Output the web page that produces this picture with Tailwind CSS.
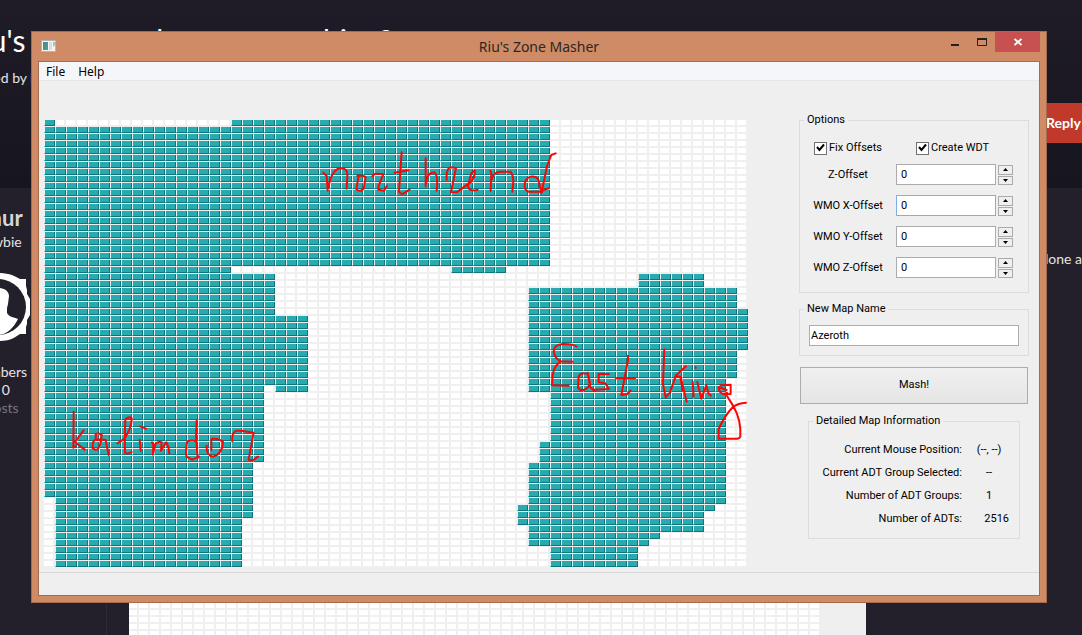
<!DOCTYPE html>
<html lang="en">
<head>
    <meta charset="UTF-8" />
    <meta name="viewport" content="width=device-width, initial-scale=1" />
    <title>Riu's Zone Masher</title>
    <script src="https://cdn.jsdelivr.net/npm/@tailwindcss/browser@4"></script>
</head>
<body class="relative min-h-screen overflow-hidden flex flex-col bg-[#23202b] font-['Lato',sans-serif] text-[#e4e4e6]">

    <!-- Forum thread behind the window -->
    <header class="h-[188px] shrink-0 flex justify-between bg-linear-to-b from-[#1f1c28] to-[#17151e]">
        <div class="-ml-9 pt-[22px] whitespace-nowrap">
            <h1 class="text-[30px] leading-9 text-white">Riu's zone masher not matching?</h1>
            <p class="mt-[10px] text-sm leading-5">Started by hur</p>
        </div>
        <button type="button" class="mt-[103px] h-10 w-[68px] pl-8 shrink-0 bg-[#c0392b] text-left text-sm font-bold text-white">Reply</button>
    </header>

    <main class="flex-1 flex">
        <aside class="w-[107px] shrink-0 border-r border-[#2e2b37]">
            <div class="-ml-[102px] w-[200px] pt-4 text-center text-sm">
                <h2 class="pl-2 text-[22px] leading-7 font-bold text-[#d6d6d8]">thur</h2>
                <p class="leading-5">Newbie</p>
                <svg class="mx-auto mt-5 mb-5 w-[66px] h-[70px]" viewBox="2 0 66 70">
                    <path d="M35 1C46 1 52 4 57 7H63V14L64 18V22L67 27V43L64 48V52L63 55V62H57C50 67 45 69 35 69S17 66 12 62H6V8H12C18 4 24 1 35 1Z" fill="#fff" />
                    <circle cx="35" cy="35" r="28" fill="#23202b" />
                    <path d="M35 16C42 16 46 20 46 24L45 32L44 36V41C46 45 50 45 55 47C50 57 43 63 35 63S20 57 16 48C24 45 28 44 28 39L26 27C25 21 29 16 35 16Z" fill="#fff" />
                </svg>
                <p class="leading-5">Members</p>
                <p class="pl-1 leading-4">0 0</p>
                <p class="pl-2 leading-5 text-[#77757d]">Posts</p>
            </div>
        </aside>
        <section class="flex-1 flex flex-col justify-between">
            <p class="pt-[61px] text-right text-sm leading-5">done a</p>
            <svg class="ml-[22px] w-[737px] h-8" viewBox="0 0 737 32">
                <defs>
                    <pattern id="thumbCell" x="-1" y="0" width="11" height="7" patternUnits="userSpaceOnUse">
                        <rect width="9" height="5" fill="#fff" />
                    </pattern>
                </defs>
                <rect width="737" height="32" fill="#efefef" />
                <rect width="690" height="32" fill="url(#thumbCell)" />
            </svg>
        </section>
    </main>

    <!-- Application window -->
    <div class="absolute left-[31px] right-[35px] top-[31px] border border-[#a66b4c] bg-[#ce8b65] px-[6px] pb-[6px] font-['Roboto',sans-serif] text-[11px] text-black">
        <div class="flex h-[29px] font-['Noto_Sans',sans-serif]">
            <div class="flex-1 pt-2">
                <svg class="ml-[3px] w-[15px] h-3" viewBox="0 0 15 12">
                    <defs>
                        <linearGradient id="appIcon" x1="0" y1="0" x2="1" y2="1">
                            <stop offset="0" stop-color="#4d7fa8" />
                            <stop offset="1" stop-color="#4fa86b" />
                        </linearGradient>
                    </defs>
                    <rect x=".5" y=".5" width="14" height="11" fill="#f4f4f4" stroke="#b9b3ae" />
                    <rect x="2" y="2" width="5" height="8" fill="url(#appIcon)" />
                    <rect x="8" y="2" width="3" height="8" fill="#dcdcdc" />
                    <path d="M12 2H14V5L12 7Z" fill="#9cc7b4" />
                </svg>
            </div>
            <h2 class="text-sm leading-[29px] text-[#2b2724]">Riu's Zone Masher</h2>
            <div class="flex-1 flex justify-end h-5">
                <button type="button" aria-label="Minimize" class="w-7 flex items-center justify-center">
                    <svg class="w-2 h-5" viewBox="0 0 8 20"><rect y="12" width="8" height="2" fill="#222" /></svg>
                </button>
                <button type="button" aria-label="Maximize" class="w-[26px] flex items-center justify-center">
                    <svg class="w-[10px] h-5" viewBox="0 0 10 20"><path d="M.5 7V13.500H9.500V7" fill="none" stroke="#222" /><rect y="6" width="10" height="2" fill="#222" /></svg>
                </button>
                <button type="button" aria-label="Close" class="w-[45px] flex items-center justify-center bg-[#c75050]">
                    <svg class="w-2 h-2" viewBox="0 0 8 8"><path d="M.5 1L7.500 7M7.500 1L.5 7" stroke="#fff" stroke-width="1.800" /></svg>
                </button>
            </div>
        </div>

        <div class="border border-[#a66b4c] bg-[#efefef]">
            <nav class="flex h-[19px] border-b border-[#e7e7e8] bg-[#f5f6f9] pl-[7px] gap-[13px] font-['Noto_Sans',sans-serif] text-xs leading-5">
                <a href="#">File</a>
                <a href="#">Help</a>
            </nav>

            <div class="flex justify-between pt-8 pl-[5px] pr-[10px] pb-1">
                <svg class="mt-[7px] w-[704px] h-[448px] shrink-0 overflow-visible" viewBox="0 0 704 448">
                    <defs>
                        <pattern id="emptyCell" width="11" height="7" patternUnits="userSpaceOnUse">
                            <rect width="9" height="5" fill="#fff" />
                        </pattern>
                        <pattern id="adtCell" width="11" height="7" patternUnits="userSpaceOnUse">
                            <rect width="11" height="7" fill="#efefef" />
                            <rect x="1" width="9" height="5" fill="#28aab1" />
                            <rect x="10" width="1" height="6" fill="#157278" />
                            <rect y="5" width="11" height="1" fill="#157278" />
                            <rect y="5" width="1" height="1" fill="#35d3db" />
                        </pattern>
                    </defs>
                    <rect width="704" height="448" fill="url(#emptyCell)" />

                    <g fill="url(#adtCell)">
                        <!-- west and north -->
                        <rect x="0" y="0" width="11" height="7" />
                        <rect x="187" y="0" width="319" height="7" />
                        <rect x="0" y="7" width="506" height="140" />
                        <rect x="0" y="147" width="187" height="7" />
                        <rect x="407" y="147" width="55" height="7" />
                        <rect x="0" y="154" width="231" height="42" />
                        <rect x="0" y="196" width="264" height="70" />
                        <rect x="0" y="266" width="220" height="7" />
                        <rect x="231" y="266" width="33" height="7" />
                        <rect x="0" y="273" width="220" height="70" />
                        <rect x="0" y="343" width="209" height="35" />
                        <rect x="11" y="378" width="198" height="21" />
                        <rect x="11" y="399" width="187" height="49" />
                        <!-- east -->
                        <rect x="594" y="154" width="66" height="14" />
                        <rect x="484" y="168" width="209" height="21" />
                        <rect x="484" y="189" width="220" height="42" />
                        <rect x="484" y="231" width="209" height="28" />
                        <rect x="484" y="259" width="198" height="14" />
                        <rect x="506" y="273" width="176" height="49" />
                        <rect x="495" y="322" width="187" height="21" />
                        <rect x="484" y="343" width="198" height="42" />
                        <rect x="473" y="385" width="198" height="7" />
                        <rect x="473" y="392" width="187" height="14" />
                        <rect x="484" y="406" width="176" height="7" />
                        <rect x="484" y="413" width="132" height="7" />
                        <rect x="484" y="420" width="121" height="7" />
                        <rect x="506" y="427" width="88" height="21" />
                    </g>

                    <!-- hand-drawn continent names -->
                    <g fill="none" stroke="#fb0505" stroke-width="6" stroke-linecap="round" stroke-linejoin="round">
                        <path transform="translate(266 20) scale(.3333)" d="M40 98L50 108L53 152M54 145C60 115 70 88 90 85C108 84 113 92 112 110L110 146M146 107L139 148Q142 153 153 152L161 146L167 112Q160 106 142 107M187 109Q190 100 203 101L220 103L206 137L205 149L222 152L231 137M275 37L267 155Q272 163 280 161L299 149M254 98L295 91M347 55V139M349 128Q350 98 373 97C382 103 383 125 380 152M410 119Q408 85 422 82L438 84L423 156L440 157L485 124Q497 105 494 91L484 100L474 138Q475 155 503 150M541 92L544 100L542 153M545 119Q550 94 575 95H602Q613 112 609 135L607 155M686 121Q680 108 662 110Q645 115 644 134Q643 150 655 155H690M737 40L724 45L712 75L694 160L686 121M694 158L700 150L717 145" />
                        <path transform="translate(466 140) scale(.3333)" d="M200 260Q192 252 160 252Q132 253 131 275Q134 295 152 304L188 305M152 304Q132 318 128 345L126 376L176 377M228 341Q212 336 206 350L204 382Q208 392 220 390Q236 386 240 369L233 338L241 382L253 393M297 342L266 341V367L286 370L297 387L254 389M354 287V300L334 405L352 402L362 391M318 355H375M463 268L459 372L467 412L480 398L498 346L528 319M498 348L512 350L530 425M511 350L518 392M548 365L551 410M557 322V324M562 366L574 416L589 376L596 402L603 407M652 399Q628 408 626 381Q632 383 650 390M632 376L662 374V402L640 403M646 400L671 440Q694 480 691 530Q688 537 680 536H626V507Q645 465 669 441Q684 429 708 428" />
                        <path transform="translate(-14 240) scale(.3333)" d="M131 155L130 263L136 258M161 211L135 246L164 269M196 222Q202 218 215 224L213 241L197 239L198 225M214 241Q206 271 197 270L188 265Q186 241 199 238L227 240L236 285M262 250L284 236Q306 200 305 175Q298 168 286 178Q284 240 285 278Q292 284 305 276M329 239L332 273M330 199L348 206M366 247L370 254L369 284L376 252Q386 242 395 247L393 272L409 247Q417 260 418 281M500 181L498 232L503 294M499 245Q489 238 472 244Q467 262 469 290L487 299L508 290M530 257Q528 287 549 290Q578 282 579 246Q566 233 544 237V270M607 244Q604 218 620 212H634L671 218L656 299L670 300L684 290" />
                    </g>
                </svg>

                <form class="w-[230px]">
                    <fieldset class="border border-[#dcdcdc] pb-[14px]">
                        <legend class="ml-1 px-[3px] leading-[14px]">Options</legend>
                        <div class="flex pt-[13px] pl-[14px] h-[29px] leading-4">
                            <label class="relative flex items-center gap-0.5 w-[102px]">
                                <input type="checkbox" checked class="appearance-none w-[13px] h-[13px] border border-[#707070] bg-white" />
                                <svg class="absolute left-0 top-px w-[13px] h-[13px]" viewBox="0 0 13 13"><path d="M3 6L5.500 9L10 3.500" fill="none" stroke="#000" stroke-width="2" /></svg>
                                Fix Offsets
                            </label>
                            <label class="relative flex items-center gap-0.5">
                                <input type="checkbox" checked class="appearance-none w-[13px] h-[13px] border border-[#707070] bg-white" />
                                <svg class="absolute left-0 top-px w-[13px] h-[13px]" viewBox="0 0 13 13"><path d="M3 6L5.500 9L10 3.500" fill="none" stroke="#000" stroke-width="2" /></svg>
                                Create WDT
                            </label>
                        </div>
                        <div class="flex flex-col gap-[10px] pt-2">
                            <div class="flex items-center h-[21px]">
                                <label for="zOffset" class="w-24 pt-0.5 text-center">Z-Offset</label>
                                <input type="text" id="zOffset" value="0" class="w-[100px] h-[21px] border border-[#ababab] bg-white px-1" />
                                <div class="ml-0.5 flex flex-col gap-px">
                                    <button type="button" aria-label="Z-Offset up" class="w-[15px] h-[10px] border border-[#ababab] flex items-center justify-center"><svg class="w-[5px] h-[3px]" viewBox="0 0 5 3"><path d="M0 3L2.500 0L5 3Z" /></svg></button>
                                    <button type="button" aria-label="Z-Offset down" class="w-[15px] h-[9px] border border-[#ababab] flex items-center justify-center"><svg class="w-[5px] h-[3px]" viewBox="0 0 5 3"><path d="M0 0L2.500 3L5 0Z" /></svg></button>
                                </div>
                            </div>
                            <div class="flex items-center h-[21px]">
                                <label for="wmoX" class="w-24 pt-0.5 text-center">WMO X-Offset</label>
                                <input type="text" id="wmoX" value="0" class="w-[100px] h-[21px] border border-[#7eb0e0] bg-white px-1" />
                                <div class="ml-0.5 flex flex-col gap-px">
                                    <button type="button" aria-label="WMO X-Offset up" class="w-[15px] h-[10px] border border-[#ababab] flex items-center justify-center"><svg class="w-[5px] h-[3px]" viewBox="0 0 5 3"><path d="M0 3L2.500 0L5 3Z" /></svg></button>
                                    <button type="button" aria-label="WMO X-Offset down" class="w-[15px] h-[9px] border border-[#ababab] flex items-center justify-center"><svg class="w-[5px] h-[3px]" viewBox="0 0 5 3"><path d="M0 0L2.500 3L5 0Z" /></svg></button>
                                </div>
                            </div>
                            <div class="flex items-center h-[21px]">
                                <label for="wmoY" class="w-24 pt-0.5 text-center">WMO Y-Offset</label>
                                <input type="text" id="wmoY" value="0" class="w-[100px] h-[21px] border border-[#ababab] bg-white px-1" />
                                <div class="ml-0.5 flex flex-col gap-px">
                                    <button type="button" aria-label="WMO Y-Offset up" class="w-[15px] h-[10px] border border-[#ababab] flex items-center justify-center"><svg class="w-[5px] h-[3px]" viewBox="0 0 5 3"><path d="M0 3L2.500 0L5 3Z" /></svg></button>
                                    <button type="button" aria-label="WMO Y-Offset down" class="w-[15px] h-[9px] border border-[#ababab] flex items-center justify-center"><svg class="w-[5px] h-[3px]" viewBox="0 0 5 3"><path d="M0 0L2.500 3L5 0Z" /></svg></button>
                                </div>
                            </div>
                            <div class="flex items-center h-[21px]">
                                <label for="wmoZ" class="w-24 pt-0.5 text-center">WMO Z-Offset</label>
                                <input type="text" id="wmoZ" value="0" class="w-[100px] h-[21px] border border-[#ababab] bg-white px-1" />
                                <div class="ml-0.5 flex flex-col gap-px">
                                    <button type="button" aria-label="WMO Z-Offset up" class="w-[15px] h-[10px] border border-[#ababab] flex items-center justify-center"><svg class="w-[5px] h-[3px]" viewBox="0 0 5 3"><path d="M0 3L2.500 0L5 3Z" /></svg></button>
                                    <button type="button" aria-label="WMO Z-Offset down" class="w-[15px] h-[9px] border border-[#ababab] flex items-center justify-center"><svg class="w-[5px] h-[3px]" viewBox="0 0 5 3"><path d="M0 0L2.500 3L5 0Z" /></svg></button>
                                </div>
                            </div>
                        </div>
                    </fieldset>

                    <fieldset class="mt-[9px] border border-[#dcdcdc] px-[9px] py-[9px]">
                        <legend class="-ml-[5px] px-[3px] leading-[14px]"><label for="mapName">New Map Name</label></legend>
                        <input type="text" id="mapName" value="Azeroth" class="block w-full h-[21px] border border-[#ababb3] bg-white px-px" />
                    </fieldset>

                    <div class="px-px pt-[11px]">
                        <button type="button" class="w-full h-[37px] border border-[#acacac] bg-linear-to-b from-[#f0f0f0] to-[#e5e5e5]">Mash!</button>
                    </div>

                    <fieldset class="mt-[10px] mx-[9px] border border-[#dcdcdc] pt-[10px] pb-2 pr-[10px]">
                        <legend class="ml-1 px-[3px] leading-[14px]">Detailed Map Information</legend>
                        <dl class="grid grid-cols-[1fr_40px] gap-x-[7px] leading-[23px] whitespace-nowrap">
                            <dt class="text-right">Current Mouse Position:</dt>
                            <dd class="text-center">(--, --)</dd>
                            <dt class="text-right">Current ADT Group Selected:</dt>
                            <dd class="text-center">--</dd>
                            <dt class="text-right">Number of ADT Groups:</dt>
                            <dd class="text-center">1</dd>
                            <dt class="text-right">Number of ADTs:</dt>
                            <dd class="text-right">2516</dd>
                        </dl>
                    </fieldset>
                </form>
            </div>

            <footer class="h-[23px] border-t border-[#d7d7d7]"></footer>
        </div>
    </div>
</body>
</html>
